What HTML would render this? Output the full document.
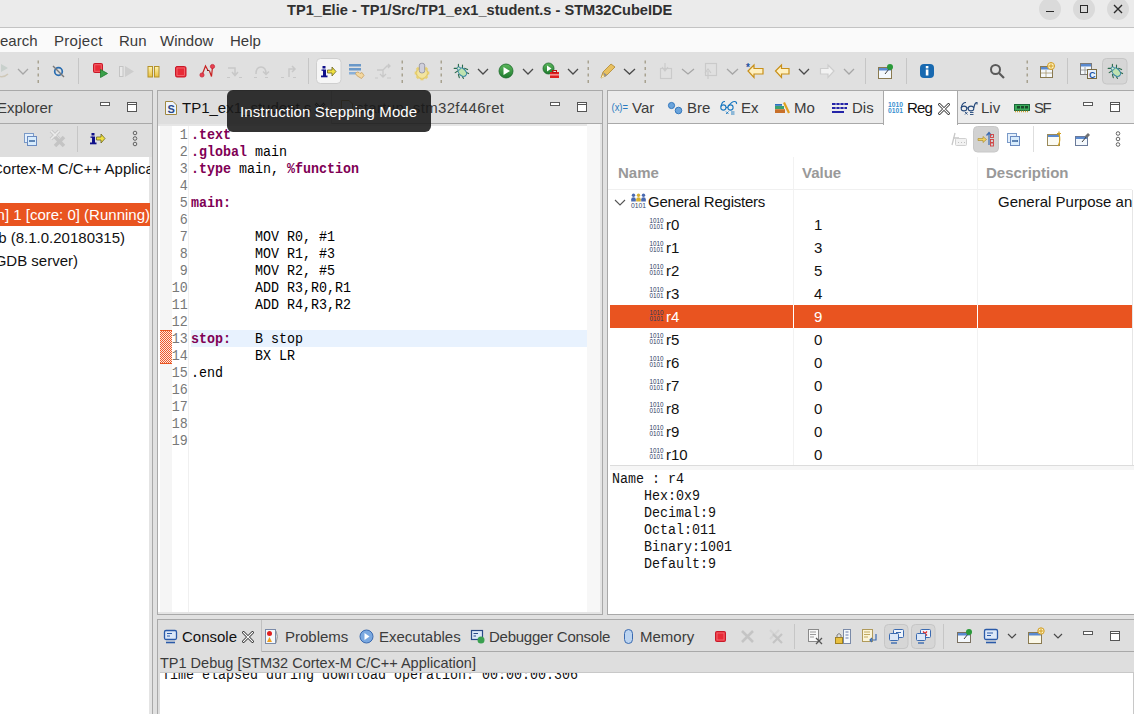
<!DOCTYPE html>
<html><head><meta charset="utf-8">
<style>
*{box-sizing:border-box;margin:0;padding:0}
html,body{width:1134px;height:714px;overflow:hidden;background:#e1e1e1;font-family:"Liberation Sans",sans-serif;font-size:15px;color:#1e1e1e}
.a{position:absolute}
.t{position:absolute;white-space:nowrap;line-height:17px;font-size:15px}
.m{position:absolute;white-space:nowrap;font-family:"Liberation Mono",monospace;font-size:14.5px;line-height:17px;transform:scaleX(0.9195);transform-origin:0 0}
svg{position:absolute;overflow:visible}
.sep{position:absolute;width:1px;background:#c4c4c4}
.dsep{position:absolute;width:2px;background:repeating-linear-gradient(#a09a88 0 3px,transparent 3px 6px)}
.chev{position:absolute;width:11px;height:6px}
</style></head><body>
<!-- TITLE BAR -->
<div class="a" style="left:0;top:0;width:1134px;height:27px;background:#ebebeb"></div>
<div class="a" style="left:0;top:27px;width:1134px;height:1px;background:#c3c3c3"></div>
<div class="t" style="left:287px;top:2px;font-weight:bold;font-size:14.6px;color:#303030">TP1_Elie - TP1/Src/TP1_ex1_student.s - STM32CubeIDE</div>
<div class="a" style="left:1039px;top:-2px;width:22px;height:22px;border-radius:50%;background:#dadada"></div>
<div class="a" style="left:1073px;top:-2px;width:22px;height:22px;border-radius:50%;background:#dadada"></div>
<div class="a" style="left:1107px;top:-2px;width:22px;height:22px;border-radius:50%;background:#dadada"></div>
<div class="a" style="left:1046px;top:10.5px;width:8px;height:1.5px;background:#2b2b2b"></div>
<div class="a" style="left:1080px;top:5px;width:8px;height:8px;border:1.5px solid #2b2b2b"></div>
<svg style="left:1114px;top:5px" width="8" height="8"><path d="M0 0L8 8M8 0L0 8" stroke="#2b2b2b" stroke-width="1.4"/></svg>

<!-- MENU -->
<div class="a" style="left:0;top:28px;width:1134px;height:24px;background:#fafafa"></div>
<div class="t" style="left:-10px;top:32px;color:#3a3a3a">Search</div>
<div class="t" style="left:54px;top:32px;color:#3a3a3a;letter-spacing:0.3px">Project</div>
<div class="t" style="left:119px;top:32px;color:#3a3a3a">Run</div>
<div class="t" style="left:160px;top:32px;color:#3a3a3a">Window</div>
<div class="t" style="left:230px;top:32px;color:#3a3a3a">Help</div>

<!-- TOOLBAR -->
<div class="a" style="left:0;top:52px;width:1134px;height:38px;background:#e0e0e0"></div>
<!--TOOLBAR_ICONS-->
<svg style="left:0;top:0" width="1134" height="714" viewBox="0 0 1134 714">
<defs>
<linearGradient id="yel" x1="0" y1="0" x2="0" y2="1"><stop offset="0" stop-color="#fff3b0"/><stop offset="1" stop-color="#e8c040"/></linearGradient>
<linearGradient id="grn" x1="0" y1="0" x2="0" y2="1"><stop offset="0" stop-color="#5cb85c"/><stop offset="1" stop-color="#1e7a2e"/></linearGradient>
<linearGradient id="red" x1="0" y1="0" x2="0" y2="1"><stop offset="0" stop-color="#f05050"/><stop offset="1" stop-color="#c81818"/></linearGradient>
</defs>
<!-- separators -->
<g fill="#a8a290">
<rect x="37.5" y="60.5" width="1.5" height="3"/><rect x="37.5" y="67" width="1.5" height="3"/><rect x="37.5" y="73.5" width="1.5" height="3"/><rect x="37.5" y="80" width="1.5" height="3"/>
<rect x="401.5" y="60.5" width="1.5" height="3"/><rect x="401.5" y="67" width="1.5" height="3"/><rect x="401.5" y="73.5" width="1.5" height="3"/><rect x="401.5" y="80" width="1.5" height="3"/>
<rect x="440.5" y="60.5" width="1.5" height="3"/><rect x="440.5" y="67" width="1.5" height="3"/><rect x="440.5" y="73.5" width="1.5" height="3"/><rect x="440.5" y="80" width="1.5" height="3"/>
<rect x="587.5" y="60.5" width="1.5" height="3"/><rect x="587.5" y="67" width="1.5" height="3"/><rect x="587.5" y="73.5" width="1.5" height="3"/><rect x="587.5" y="80" width="1.5" height="3"/>
<rect x="644.5" y="60.5" width="1.5" height="3"/><rect x="644.5" y="67" width="1.5" height="3"/><rect x="644.5" y="73.5" width="1.5" height="3"/><rect x="644.5" y="80" width="1.5" height="3"/>
<rect x="1026.5" y="60.5" width="1.5" height="3"/><rect x="1026.5" y="67" width="1.5" height="3"/><rect x="1026.5" y="73.5" width="1.5" height="3"/><rect x="1026.5" y="80" width="1.5" height="3"/>
</g>
<g fill="#c6c6c6">
<rect x="78" y="58" width="1" height="26"/><rect x="308" y="58" width="1" height="26"/><rect x="865" y="58" width="1" height="26"/><rect x="906" y="58" width="1" height="26"/><rect x="1067" y="58" width="1" height="26"/>
</g>
<!-- chevrons -->
<g fill="none" stroke-width="1.3">
<path d="M18 69L23 74L28 69" stroke="#a6a6a6"/>
<path d="M478 69L483 74L488 69" stroke="#4a4a4a"/>
<path d="M523 69L528 74L533 69" stroke="#4a4a4a"/>
<path d="M568 69L573 74L578 69" stroke="#4a4a4a"/>
<path d="M624 69L629.5 74L635 69" stroke="#4a4a4a"/>
<path d="M682 69L688 74L694 69" stroke="#a6a6a6"/>
<path d="M727 69L732.5 74L738 69" stroke="#a6a6a6"/>
<path d="M799 69L804 74L809 69" stroke="#4a4a4a"/>
<path d="M844 69L849 74L854 69" stroke="#a6a6a6"/>
</g>
<!-- 1 grayed partial -->
<path d="M1 64L8 68L1 72Z" fill="#c8d0cc"/><path d="M-2 76Q4 78 8 74" fill="none" stroke="#cfc8b8" stroke-width="1.5"/>
<!-- skip breakpoints -->
<circle cx="58.5" cy="71.5" r="3.8" fill="none" stroke="#2a6db0" stroke-width="1.7"/>
<path d="M53 66L64 77" stroke="#7a7a7a" stroke-width="1.4"/>
<!-- terminate relaunch -->
<rect x="93.5" y="63.5" width="9" height="9" rx="1" fill="#e82a36" stroke="#c81828" stroke-width="1"/>
<rect x="94.8" y="64.8" width="6.4" height="6.4" fill="none" stroke="#f47a80" stroke-width="0.7"/>
<path d="M100.5 69.5L107.5 73.5L100.5 77.5Z" fill="#3aa04a" stroke="#1a7a2a" stroke-width="0.8"/>
<!-- resume grayed -->
<rect x="119.5" y="66.5" width="3.5" height="10" fill="#e8e8e8" stroke="#c4c4c4"/>
<path d="M125 66L134 71.5L125 77Z" fill="#cdcdcd"/>
<!-- suspend -->
<rect x="148" y="66.5" width="4.5" height="10.5" fill="url(#yel)" stroke="#b4922a" stroke-width="1"/>
<rect x="154.5" y="66.5" width="4.5" height="10.5" fill="url(#yel)" stroke="#b4922a" stroke-width="1"/>
<!-- terminate -->
<rect x="175.5" y="66.5" width="10.5" height="10.5" rx="1.5" fill="#e82a36" stroke="#c81828" stroke-width="1"/>
<rect x="177" y="68" width="7.5" height="7.5" fill="none" stroke="#f47a80" stroke-width="0.7"/>
<!-- disconnect -->
<path d="M202 75L205.5 66L208 70.5M209.5 71L211.5 76.5L212.5 67" fill="none" stroke="#c82020" stroke-width="1.2"/>
<path d="M207 70.5H209.5" stroke="#7a2020" stroke-width="1"/>
<circle cx="202" cy="75" r="2.1" fill="#e84050" stroke="#c02030" stroke-width="0.7"/><circle cx="212.5" cy="66.5" r="2.1" fill="#e84050" stroke="#c02030" stroke-width="0.7"/>
<!-- step into/over/return grayed -->
<g fill="none" stroke="#c8c8c8" stroke-width="1.5">
<path d="M228 68H235V75M232 72L235 75.5L238 72"/><path d="M227 77.5H230M239 77.5H242" stroke-width="1.2"/>
<path d="M256 74Q256 67 261 67Q266 67 266 74M263 71.5L266 74.5L269 71.5"/><path d="M254 77.5H257M265 77.5H268" stroke-width="1.2"/>
<path d="M289 77V69H295M292 66L295 69L292 72"/><path d="M281 77.5H284M293 77.5H296" stroke-width="1.2"/>
</g>
<!-- selected instruction stepping button -->
<rect x="316.5" y="58.5" width="24.5" height="25" rx="4" fill="#f6f6f6" stroke="#cfcfcf"/>
<g transform="translate(231 -67)"><rect x="91.5" y="133" width="3" height="2.5" fill="#10108a"/><rect x="92" y="136.5" width="3" height="7" fill="#10108a"/><rect x="90" y="142.5" width="6.5" height="1.8" fill="#10108a"/><rect x="90.5" y="136.5" width="2" height="1.3" fill="#10108a"/>
<path d="M96.5 137H101V134L105 138.5L101 143V140H96.5Z" fill="#f0e040" stroke="#6a6420" stroke-width="0.8"/></g>
<!-- use step filters -->
<rect x="349" y="64" width="12" height="2.5" fill="#6a98c8"/><rect x="349" y="68" width="12" height="2.5" fill="#6a98c8"/><rect x="349" y="72" width="7" height="2.5" fill="#8ab0d8"/>
<path d="M355.5 73.5Q357 71 359 72.5L360 73.5L362 72.5L364 75.5L361.5 78.5L359 77Q357 76.5 355.5 73.5Z" fill="#f4d8a0" stroke="#c8a060" stroke-width="0.8"/>
<!-- grayed -->
<path d="M377 70H383V77M380 74L383 77L386 74M383 70L387 66H390M388 64L390 66L388 68" fill="none" stroke="#c8c8c8" stroke-width="1.3"/>
<path d="M375 78H378M387 78H391" stroke="#c8c8c8" stroke-width="1.2"/>
<!-- yellow gear -->
<g transform="translate(422 73)"><circle r="5.6" fill="#f2e4a0" stroke="#d4b850" stroke-width="1"/>
<g fill="#e8d070"><rect x="-1.5" y="-7.3" width="3" height="2.5"/><rect x="-1.5" y="4.8" width="3" height="2.5"/><rect x="-7.3" y="-1.5" width="2.5" height="3"/><rect x="4.8" y="-1.5" width="2.5" height="3"/>
<rect x="-1.5" y="-7.3" width="3" height="2.5" transform="rotate(45)"/><rect x="-1.5" y="4.8" width="3" height="2.5" transform="rotate(45)"/><rect x="-7.3" y="-1.5" width="2.5" height="3" transform="rotate(45)"/><rect x="4.8" y="-1.5" width="2.5" height="3" transform="rotate(45)"/></g></g>
<rect x="419.3" y="63.3" width="5.4" height="9.6" rx="2.2" fill="#d0d0dc" stroke="#8a8a98" stroke-width="0.8"/>
<!-- bug -->
<g id="bugT"><g stroke="#2a6a4a" stroke-width="1.1" fill="none" stroke-linecap="round">
<path d="M458.4 64.3V67M462.5 65V67.5M454.2 68.4H457M455.2 72.6L457.8 71M458.4 74.5L459.3 77.6M464.6 68.2L467.6 69.6M466 72.3L468.6 73.6M462.4 76.8L463.5 78.4"/>
</g>
<ellipse cx="462.3" cy="72.2" rx="3.4" ry="4.8" fill="#bfe3b0" stroke="#2a80a0" stroke-width="1" transform="rotate(-45 462.3 72.2)"/>
<circle cx="458.7" cy="68.5" r="1.6" fill="#d8f0d0" stroke="#2a80a0" stroke-width="0.9"/></g>
<!-- green play -->
<circle cx="506" cy="71" r="7" fill="url(#grn)" stroke="#1a6a2a" stroke-width="0.8"/>
<path d="M503.5 67L510 71L503.5 75Z" fill="#fff"/>
<!-- ext tools -->
<circle cx="548.5" cy="68.5" r="5.5" fill="url(#grn)" stroke="#1a6a2a" stroke-width="0.8"/>
<path d="M547 65.5L551.5 68.5L547 71.5Z" fill="#fff"/>
<rect x="550" y="72" width="9" height="6" fill="#e02020"/><rect x="552.5" y="70.5" width="4" height="2" fill="none" stroke="#c01010"/><rect x="550" y="74.5" width="9" height="0.8" fill="#fff"/>
<!-- pen -->
<path d="M601 78L603 72L611 64L615 67L607 75Z" fill="#e8c060" stroke="#b08830" stroke-width="0.8"/>
<path d="M603 72L607 75L605 77Z" fill="#909090"/><path d="M601 78L603 75L604 77Z" fill="#fff8d0"/>
<!-- grayed import/export -->
<g fill="none" stroke="#cacaca" stroke-width="1.2">
<rect x="660.5" y="68.5" width="11" height="10"/><path d="M665 63V70M662 67L665 71L668 67"/>
<rect x="705.5" y="63.5" width="11" height="12"/><path d="M708 79V71M705 73L708 69L711 73"/>
</g>
<!-- last edit -->
<path d="M747 71L753 65V68.5H762V74H753V77.5Z" fill="#fff0c0" stroke="#c8901a" stroke-width="1.2" transform="translate(1 0)"/>
<text x="746" y="71" font-size="10" fill="#2050a0" font-family="Liberation Sans" font-weight="bold">*</text>
<!-- back -->
<path d="M775.5 71L781.5 65V68.5H789V74H781.5V77.5Z" fill="#fff0c0" stroke="#c8901a" stroke-width="1.2"/>
<!-- forward grayed -->
<path d="M834 71L828 65V68.5H820.5V74H828V77.5Z" fill="#f2f2f2" stroke="#cdcdcd" stroke-width="1.2"/>
<!-- pin editor -->
<rect x="878.5" y="67.5" width="13" height="11" fill="#f4f8fc" stroke="#8a7a50"/><rect x="879" y="68" width="12" height="2.5" fill="#5a8ad0"/>
<path d="M885 74L889 69" stroke="#404040" stroke-width="1"/><circle cx="890" cy="67" r="3" fill="#2a9a3a"/>
<!-- info -->
<rect x="920" y="64" width="14" height="14" rx="4" fill="#1869b0"/>
<rect x="925.8" y="69.5" width="2.6" height="6" fill="#fff"/><rect x="925.8" y="66" width="2.6" height="2.4" fill="#fff"/>
<!-- search -->
<circle cx="995.5" cy="69.5" r="4.5" fill="none" stroke="#5a5a5a" stroke-width="2"/>
<path d="M999 73L1004 78" stroke="#5a5a5a" stroke-width="2.2"/>
<!-- open perspective -->
<rect x="1040.5" y="66.5" width="12" height="11" fill="#f4f8fc" stroke="#8a7a50"/><rect x="1041" y="67" width="11" height="2.5" fill="#5a8ad0"/>
<path d="M1046 70V77M1041 73H1052" stroke="#a89870" stroke-width="0.8"/>
<circle cx="1051" cy="66" r="3.5" fill="#fff4c0" stroke="#d09a20"/><path d="M1051 63.5V68.5M1048.5 66H1053.5" stroke="#d09a20" stroke-width="1"/>
<!-- C/C++ perspective -->
<rect x="1080.5" y="63.5" width="11" height="11" fill="#f4f8fc" stroke="#7a7a7a"/><rect x="1081" y="64" width="10" height="2.5" fill="#5a8ad0"/>
<path d="M1085 67V74M1081 70H1091" stroke="#909090" stroke-width="0.8"/>
<rect x="1087.5" y="69.5" width="9" height="9" fill="#e8f0fa" stroke="#7a6a40"/>
<text x="1089" y="77.5" font-size="9" font-weight="bold" fill="#1a50a0" font-family="Liberation Sans">C</text>
<!-- debug perspective selected -->
<rect x="1102.5" y="58.5" width="24.5" height="25.5" rx="4" fill="#d6d6d6" stroke="#c6c6c6"/>
<g transform="translate(654 0)"><g stroke="#2a6a4a" stroke-width="1.1" fill="none" stroke-linecap="round">
<path d="M458.4 64.3V67M462.5 65V67.5M454.2 68.4H457M455.2 72.6L457.8 71M458.4 74.5L459.3 77.6M464.6 68.2L467.6 69.6M466 72.3L468.6 73.6M462.4 76.8L463.5 78.4"/>
</g>
<ellipse cx="462.3" cy="72.2" rx="3.4" ry="4.8" fill="#bfe3b0" stroke="#2a80a0" stroke-width="1" transform="rotate(-45 462.3 72.2)"/>
<circle cx="458.7" cy="68.5" r="1.6" fill="#d8f0d0" stroke="#2a80a0" stroke-width="0.9"/></g>
</svg>

<!--/TOOLBAR_ICONS-->

<!--PANELS-->
<!-- ========== LEFT PANEL (Debug) ========== -->
<div class="a" style="left:-1px;top:90px;width:154px;height:640px;border:1px solid #a9a9a9;background:#e4e4e4"></div>
<div class="a" style="left:0;top:91px;width:152px;height:32px;background:#dedede"></div>
<div class="a" style="left:0;top:123px;width:152px;height:1px;background:#a9a9a9"></div>
<div class="a" style="left:0;top:124px;width:152px;height:33px;background:#dedede"></div>
<div class="a" style="left:0;top:157px;width:149px;height:560px;background:#fff"></div>
<div class="t" style="left:-3px;top:99px;color:#3c3c3c">Explorer</div>
<div class="a" style="left:100px;top:102px;width:10px;height:4px;border:1px solid #5a5a5a;background:#fff"></div>
<div class="a" style="left:127px;top:102px;width:10px;height:10px;border:1px solid #555;background:linear-gradient(#fff 0 1px,#555 1px 2px,#fff 2px)"></div>
<svg style="left:0;top:0" width="160" height="160" viewBox="0 0 160 160">
<rect x="24.5" y="133.5" width="9" height="9" fill="#e4f0fc" stroke="#7a9ac8"/>
<rect x="27.5" y="136.5" width="9" height="9" fill="#d8ecfc" stroke="#6a8ac0"/>
<path d="M29 141H35" stroke="#1f4f8f" stroke-width="1.3"/>
<path d="M51 131L59 139M59 131L51 139" stroke="#c8c8c8" stroke-width="3.6"/><path d="M51 131L59 139M59 131L51 139" stroke="#ececec" stroke-width="1.6"/>
<path d="M55 137L64 146M64 137L55 146" stroke="#c4c4c4" stroke-width="3.6"/>
<rect x="77" y="126" width="1" height="26" fill="#c6c6c6"/>
<g id="istep"><rect x="91.5" y="133" width="3" height="2.5" fill="#10108a"/><rect x="92" y="136.5" width="3" height="7" fill="#10108a"/><rect x="90" y="142.5" width="6.5" height="1.8" fill="#10108a"/><rect x="90.5" y="136.5" width="2" height="1.3" fill="#10108a"/>
<path d="M96.5 137H101V134L105 138.5L101 143V140H96.5Z" fill="#f0e040" stroke="#6a6420" stroke-width="0.8"/></g>
<circle cx="135" cy="133" r="1.8" fill="none" stroke="#555" stroke-width="0.9"/><circle cx="135" cy="138.5" r="1.8" fill="none" stroke="#555" stroke-width="0.9"/><circle cx="135" cy="144" r="1.8" fill="none" stroke="#555" stroke-width="0.9"/>
</svg>
<div class="a" style="left:0;top:157px;width:150px;height:560px;overflow:hidden">
<div class="t" style="left:-8px;top:3px;color:#111">Cortex-M C/C++ Application</div>
<div class="a" style="left:0;top:46px;width:150px;height:23px;background:#e95420"></div>
<div class="t" style="right:0;top:49px;color:#fff">[main] 1 [core: 0] (Running)</div>
<div class="t" style="right:25px;top:72px;color:#111">gdb (8.1.0.20180315)</div>
<div class="t" style="right:72px;top:95px;color:#111">(GDB server)</div>
</div>
<!-- ========== EDITOR ========== -->
<div class="a" style="left:157px;top:90px;width:446px;height:525px;border:1px solid #a9a9a9;background:#e4e4e4"></div>
<div class="a" style="left:158px;top:91px;width:444px;height:32px;background:#dedede"></div>
<div class="a" style="left:158px;top:123px;width:444px;height:1px;background:#a9a9a9"></div>
<svg style="left:0;top:0" width="360" height="130" viewBox="0 0 360 130">
<path d="M341.5 100.5H349L352.5 104V116.5H341.5Z" fill="#eef4fc" stroke="#a08840"/>
</svg>
<div class="t" style="left:356px;top:99px;color:#3c3c3c;letter-spacing:0.33px">startup_stm32f446ret</div>
<div class="a" style="left:550px;top:102px;width:10px;height:4px;border:1px solid #5a5a5a;background:#fff"></div>
<div class="a" style="left:577px;top:102px;width:10px;height:10px;border:1px solid #555;background:linear-gradient(#fff 0 1px,#555 1px 2px,#fff 2px)"></div>
<!-- editor content -->
<div class="a" style="left:158px;top:124px;width:444px;height:2px;background:#e6e6e6"></div>
<div class="a" style="left:158px;top:126px;width:444px;height:486px;background:#fff"></div>
<div class="a" style="left:160px;top:126px;width:12px;height:486px;background:#f5f5f5"></div>
<div class="a" style="left:188px;top:126px;width:1px;height:486px;background:#f0f0f0"></div>
<div class="a" style="left:587px;top:124px;width:13px;height:488px;background:#f7f7f7"></div>
<div class="a" style="left:600px;top:124px;width:2px;height:490px;background:#e4e4e4"></div>
<div class="a" style="left:158px;top:612px;width:444px;height:2px;background:#e4e4e4"></div>
<!-- current line highlight -->
<div class="a" style="left:191px;top:330px;width:396px;height:17px;background:#e8f2fe"></div>
<!-- breakpoint markers -->
<div class="a" style="left:160px;top:330px;width:12px;height:34px;border-top:1px solid #e95420;border-bottom:1px solid #e95420;background:repeating-conic-gradient(#ee5a2a 0 25%,#fde8e0 0 50%) 0 0/2px 2px"></div>
<!--EDITOR_TEXT-->
<div class="a" style="left:158px;top:91px;width:174px;height:35px;background:#dedede;border-right:1px solid #c0c0c0"></div>
<div class="a" style="left:158px;top:124px;width:174px;height:2px;background:#e6e6e6"></div>
<svg style="left:0;top:0" width="200" height="130" viewBox="0 0 200 130">
<path d="M165.5 101.5H173L176.5 105V114.5H165.5Z" fill="#eef4fc" stroke="#a08840"/>
<text x="167.5" y="113" font-family="Liberation Sans" font-size="11" font-weight="bold" fill="#2a4a8a">S</text>
</svg>
<div class="t" style="left:182px;top:99px;color:#111">TP1_ex1_student.s</div>
<svg style="left:0;top:0" width="340" height="130" viewBox="0 0 340 130">
<path d="M315.5 103.5L324.5 112.5M324.5 103.5L315.5 112.5" stroke="#222" stroke-width="2.6"/>
<path d="M315.5 103.5L324.5 112.5M324.5 103.5L315.5 112.5" stroke="#dedede" stroke-width="1"/>
</svg>
<div class="m" style="left:163px;top:127px;width:27px;text-align:right;color:#787878;line-height:17px">1<br>2<br>3<br>4<br>5<br>6<br>7<br>8<br>9<br>10<br>11<br>12<br>13<br>14<br>15<br>16<br>17<br>18<br>19</div>
<div class="m" style="left:191px;top:127px;color:#000;line-height:17px;white-space:pre"><b style="color:#7f0055">.text</b><br><b style="color:#7f0055">.global</b> main<br><b style="color:#7f0055">.type</b> main, <b style="color:#7f0055">%function</b><br><br><b style="color:#7f0055">main:</b><br><br>        MOV R0, #1<br>        MOV R1, #3<br>        MOV R2, #5<br>        ADD R3,R0,R1<br>        ADD R4,R3,R2<br><br><b style="color:#7f0055">stop:</b>   B stop<br>        BX LR<br>.end</div>

<!--/EDITOR_TEXT-->

<!-- ========== REGISTERS ========== -->
<div class="a" style="left:607px;top:90px;width:530px;height:525px;border:1px solid #a9a9a9;background:#fff"></div>
<div class="a" style="left:608px;top:91px;width:528px;height:32px;background:#ececec"></div>
<div class="a" style="left:608px;top:123px;width:528px;height:1px;background:#a9a9a9"></div>
<!--REG_CONTENT-->
<!-- tabs -->
<div class="a" style="left:883px;top:91px;width:75px;height:34px;background:#fff;border-left:1px solid #a9a9a9;border-right:1px solid #a9a9a9"></div>
<svg style="left:0;top:0" width="1134" height="714" viewBox="0 0 1134 714">
<!-- (x)= -->
<text x="611.5" y="111" font-family="Liberation Sans" font-size="10.5" fill="#2a7ac0" textLength="16.5" lengthAdjust="spacingAndGlyphs">(x)=</text>
<!-- breakpoints -->
<circle cx="671.5" cy="105.5" r="3.1" fill="#6aa4dc" stroke="#2a70b8" stroke-width="0.9"/>
<circle cx="678.5" cy="110.5" r="3.3" fill="#6aa4dc" stroke="#2a70b8" stroke-width="0.9"/>
<!-- expressions glasses -->
<g fill="none" stroke="#1a78c0" stroke-width="1.1">
<circle cx="723.4" cy="107.5" r="2.6"/><circle cx="730.5" cy="107.5" r="2.6"/><path d="M726 107.5H728M721 106.5Q722 101 725 101.5M728 106.5Q732 101 735 101.5Q737 102 736.5 104"/>
<path d="M726 111.5L728.5 114M728.5 111.5L726 114M731 112H734.5M731 114H734.5" stroke-width="0.9"/>
</g>
<!-- modules books -->
<rect x="775" y="104" width="7" height="1.8" fill="#2a70c0"/><rect x="775" y="106" width="9" height="3" fill="#3aa070"/><rect x="775" y="109.2" width="10" height="3.8" fill="#c8702a"/>
<path d="M784 102.5L789 113" stroke="#e0a020" stroke-width="2.2"/>
<!-- disassembly -->
<g fill="#2424a8"><rect x="832" y="103" width="16" height="2"/><rect x="832" y="107" width="15" height="2"/><rect x="832" y="111" width="12" height="2"/></g>
<path d="M836 102.5V109.5M840 102.5V109.5M844 102.5V109.5" stroke="#ececec" stroke-width="0.8"/>
<!-- registers icon -->
<text x="888" y="107.3" font-family="Liberation Sans" font-size="7" font-weight="bold" fill="#3a90d0" textLength="15" lengthAdjust="spacingAndGlyphs">1010</text>
<text x="888" y="113.3" font-family="Liberation Sans" font-size="7" font-weight="bold" fill="#3a90d0" textLength="15" lengthAdjust="spacingAndGlyphs">0101</text>
<path d="M939.5 104.5L948.5 113.5M948.5 104.5L939.5 113.5" stroke="#2a2a2a" stroke-width="2.8" stroke-linecap="round"/>
<path d="M939.5 104.5L948.5 113.5M948.5 104.5L939.5 113.5" stroke="#fff" stroke-width="1.1" stroke-linecap="round"/>
<!-- live expressions -->
<g fill="none" stroke="#24487a" stroke-width="1.1">
<ellipse cx="964" cy="108.5" rx="2.8" ry="2.4"/><ellipse cx="971" cy="108.5" rx="2.8" ry="2.4"/><path d="M966.8 108H968.2M961.2 108Q962 102.5 966 102.5M973.8 108Q975 102 977 102.5V104.5"/>
<path d="M965 112L967.5 114.5M967.5 112L965 114.5M970 112.5H973.5M970 114.5H973.5" stroke-width="0.9"/>
</g>
<!-- SFR memory -->
<rect x="1014.5" y="104.5" width="15" height="6" fill="#3aaa5a" stroke="#1a6a3a"/>
<rect x="1017" y="106" width="3" height="2.5" fill="#1a4a2a"/><rect x="1021" y="106" width="3" height="2.5" fill="#1a4a2a"/><rect x="1025" y="106" width="3" height="2.5" fill="#1a4a2a"/>
<path d="M1015 111.5H1029" stroke="#c8a030" stroke-width="1.6" stroke-dasharray="1 1"/>
</svg>
<div class="t" style="left:632px;top:99px;color:#3c3c3c">Var</div>
<div class="t" style="left:687px;top:99px;color:#3c3c3c">Bre</div>
<div class="t" style="left:741px;top:99px;color:#3c3c3c">Ex</div>
<div class="t" style="left:794px;top:99px;color:#3c3c3c">Mo</div>
<div class="t" style="left:852px;top:99px;color:#3c3c3c">Dis</div>
<div class="t" style="left:907px;top:99px;color:#111;letter-spacing:-0.8px">Reg</div>
<div class="t" style="left:981px;top:99px;color:#3c3c3c">Liv</div>
<div class="t" style="left:1034px;top:99px;color:#3c3c3c;letter-spacing:-1.5px">SF</div>
<div class="a" style="left:1083px;top:102px;width:10px;height:4px;border:1px solid #5a5a5a;background:#fff"></div>
<div class="a" style="left:1110px;top:102px;width:10px;height:10px;border:1px solid #555;background:linear-gradient(#fff 0 1px,#555 1px 2px,#fff 2px)"></div>

<!-- registers toolbar -->
<svg style="left:0;top:0" width="1134" height="714" viewBox="0 0 1134 714">
<path d="M955 133L952 145M953 138H959" stroke="#c8c8c8" stroke-width="1.3" fill="none"/>
<rect x="955.5" y="138.5" width="11" height="7" rx="1" fill="#f2f2f2" stroke="#d0d0d0"/>
<path d="M958 142.5H959M961 142.5H962M964 142.5H965" stroke="#c0c0c0"/>
<rect x="973.5" y="126.5" width="25" height="25.5" rx="4" fill="#d2d2d2" stroke="#c8c8c8"/>
<path d="M978 138.5H983V136.5L986.5 139.5L983 142.5V140.5H978Z" fill="#f0d060" stroke="#b09030" stroke-width="0.7"/>
<path d="M989 133V145M986.5 135.5L989 132.5L991.5 135.5" stroke="#3a6ab0" stroke-width="1.2" fill="none"/>
<rect x="990.5" y="134.5" width="3" height="3" fill="none" stroke="#d04040" stroke-width="0.9"/><rect x="990.5" y="139.5" width="3" height="3" fill="none" stroke="#d04040" stroke-width="0.9"/><rect x="990.5" y="143" width="3" height="3" fill="none" stroke="#d04040" stroke-width="0.9"/>
<rect x="1007.5" y="133.5" width="9" height="9" fill="#e4f0fc" stroke="#7a9ac8"/>
<rect x="1010.5" y="136.5" width="9" height="9" fill="#d8ecfc" stroke="#6a8ac0"/>
<path d="M1012 141H1018" stroke="#1f4f8f" stroke-width="1.3"/>
<rect x="1033" y="126" width="1" height="26" fill="#dedede"/>
<rect x="1047.5" y="134.5" width="12" height="11" fill="#fbfbf4" stroke="#9a8a5a"/><rect x="1048" y="135" width="11" height="2" fill="#5a8ad0"/>
<path d="M1058 146Q1061 141 1059 134M1057 133.5H1061M1059 131.5V135.5" fill="none" stroke="#d0a020" stroke-width="1.2"/>
<rect x="1075.5" y="136.5" width="12" height="9" fill="#f4f8fc" stroke="#6a7a9a"/><rect x="1076" y="137" width="11" height="2" fill="#5a8ad0"/>
<path d="M1082 142L1087 136" stroke="#404040" stroke-width="1"/><path d="M1085 136L1088 133L1090 135L1087 138Z" fill="#707070"/>
<circle cx="1118" cy="133.5" r="1.8" fill="none" stroke="#555" stroke-width="0.9"/><circle cx="1118" cy="139" r="1.8" fill="none" stroke="#555" stroke-width="0.9"/><circle cx="1118" cy="144.5" r="1.8" fill="none" stroke="#555" stroke-width="0.9"/>
</svg>

<!-- table -->
<div class="a" style="left:793px;top:157px;width:1px;height:308px;background:#f2f2f2"></div>
<div class="a" style="left:977px;top:157px;width:1px;height:308px;background:#f2f2f2"></div>
<div class="a" style="left:608px;top:189px;width:524px;height:1px;background:#f0f0f0"></div>
<div class="a" style="left:1132px;top:190px;width:1px;height:275px;background:#e6e6e6"></div>
<div class="t" style="left:618px;top:164px;font-weight:bold;color:#999">Name</div>
<div class="t" style="left:802px;top:164px;font-weight:bold;color:#999">Value</div>
<div class="t" style="left:986px;top:164px;font-weight:bold;color:#999">Description</div>
<!-- orange row -->
<div class="a" style="left:610px;top:305px;width:522px;height:23px;background:#e95420"></div>
<div class="a" style="left:793px;top:305px;width:1px;height:23px;background:#fff"></div>
<div class="a" style="left:977px;top:305px;width:1px;height:23px;background:#fff"></div>
<svg style="left:0;top:0" width="1134" height="714" viewBox="0 0 1134 714">
<path d="M615 200L620 205L625 200" fill="none" stroke="#555" stroke-width="1.1"/>
<g fill="#4a6ab0"><circle cx="633.5" cy="195.3" r="1.7"/><circle cx="643.5" cy="195.3" r="1.7"/><path d="M631.2 201.5V199.3Q631.2 197.2 633.5 197.2Q635.8 197.2 635.8 199.3V201.5Z"/><path d="M641.2 201.5V199.3Q641.2 197.2 643.5 197.2Q645.8 197.2 645.8 199.3V201.5Z"/></g>
<g fill="#d8b030"><circle cx="638.5" cy="195.3" r="1.7"/><path d="M636.2 201.5V199.3Q636.2 197.2 638.5 197.2Q640.8 197.2 640.8 199.3V201.5Z"/></g>
<text x="631" y="207.5" font-family="Liberation Sans" font-size="7.2" fill="#34466e" textLength="15" lengthAdjust="spacingAndGlyphs">0101</text>
<g font-family="Liberation Sans" font-size="7.4" fill="#2a3a60">
<text x="649.5" y="222.7" textLength="14" lengthAdjust="spacingAndGlyphs">1010</text><text x="649.5" y="229.2" textLength="14" lengthAdjust="spacingAndGlyphs">0101</text>
<text x="649.5" y="245.7" textLength="14" lengthAdjust="spacingAndGlyphs">1010</text><text x="649.5" y="252.2" textLength="14" lengthAdjust="spacingAndGlyphs">0101</text>
<text x="649.5" y="268.7" textLength="14" lengthAdjust="spacingAndGlyphs">1010</text><text x="649.5" y="275.2" textLength="14" lengthAdjust="spacingAndGlyphs">0101</text>
<text x="649.5" y="291.7" textLength="14" lengthAdjust="spacingAndGlyphs">1010</text><text x="649.5" y="298.2" textLength="14" lengthAdjust="spacingAndGlyphs">0101</text>
<text x="649.5" y="314.7" textLength="14" lengthAdjust="spacingAndGlyphs">1010</text><text x="649.5" y="321.2" textLength="14" lengthAdjust="spacingAndGlyphs">0101</text>
<text x="649.5" y="337.7" textLength="14" lengthAdjust="spacingAndGlyphs">1010</text><text x="649.5" y="344.2" textLength="14" lengthAdjust="spacingAndGlyphs">0101</text>
<text x="649.5" y="360.7" textLength="14" lengthAdjust="spacingAndGlyphs">1010</text><text x="649.5" y="367.2" textLength="14" lengthAdjust="spacingAndGlyphs">0101</text>
<text x="649.5" y="383.7" textLength="14" lengthAdjust="spacingAndGlyphs">1010</text><text x="649.5" y="390.2" textLength="14" lengthAdjust="spacingAndGlyphs">0101</text>
<text x="649.5" y="406.7" textLength="14" lengthAdjust="spacingAndGlyphs">1010</text><text x="649.5" y="413.2" textLength="14" lengthAdjust="spacingAndGlyphs">0101</text>
<text x="649.5" y="429.7" textLength="14" lengthAdjust="spacingAndGlyphs">1010</text><text x="649.5" y="436.2" textLength="14" lengthAdjust="spacingAndGlyphs">0101</text>
<text x="649.5" y="452.7" textLength="14" lengthAdjust="spacingAndGlyphs">1010</text><text x="649.5" y="459.2" textLength="14" lengthAdjust="spacingAndGlyphs">0101</text>
</g>
</svg>
<div class="t" style="left:648px;top:193px;color:#111;letter-spacing:-0.22px">General Registers</div>
<div class="t" style="left:998px;top:193px;color:#111;width:134px;overflow:hidden">General Purpose and</div>
<div class="t" style="left:666px;top:213px;color:#111;line-height:23px">r0<br>r1<br>r2<br>r3<br><span style="color:#fff">r4</span><br>r5<br>r6<br>r7<br>r8<br>r9<br>r10</div>
<div class="t" style="left:814px;top:213px;color:#111;line-height:23px">1<br>3<br>5<br>4<br><span style="color:#fff">9</span><br>0<br>0<br>0<br>0<br>0<br>0</div>
<!-- details pane -->
<div class="a" style="left:608px;top:465px;width:528px;height:147px;background:#fff"></div>
<div class="a" style="left:610px;top:465px;width:526px;height:1px;background:#dcdcdc"></div>
<div class="a" style="left:610px;top:466px;width:526px;height:4px;background:#f6f6f6"></div>
<div class="m" style="left:612px;top:471px;color:#111;white-space:pre">Name : r4
    Hex:0x9
    Decimal:9
    Octal:011
    Binary:1001
    Default:9</div>


<!--/REG_CONTENT-->

<!-- ========== CONSOLE ========== -->
<div class="a" style="left:157px;top:619px;width:980px;height:110px;border:1px solid #a9a9a9;background:#dedede"></div>
<!--CONSOLE_CONTENT-->
<div class="a" style="left:261px;top:651px;width:875px;height:1px;background:#a9a9a9"></div>
<div class="a" style="left:261px;top:620px;width:1px;height:32px;background:#c0c0c0"></div>
<div class="a" style="left:160px;top:672px;width:974px;height:1px;background:#c8c8c8"></div>
<div class="a" style="left:1133px;top:672px;width:1px;height:50px;background:#c8c8c8"></div>
<div class="a" style="left:160px;top:673px;width:973px;height:50px;background:#fff"></div>
<svg style="left:0;top:0" width="1134" height="714" viewBox="0 0 1134 714">
<!-- console icon -->
<rect x="164.5" y="630.5" width="12" height="9" rx="1.5" fill="#dce8f8" stroke="#2a5aa8" stroke-width="1.3"/>
<path d="M167 633.5H172M167 636H170" stroke="#2a5aa8" stroke-width="1"/>
<path d="M166 642.5H175" stroke="#2a5aa8" stroke-width="1.6"/>
<path d="M243.5 632.5L252.5 641.5M252.5 632.5L243.5 641.5" stroke="#2a2a2a" stroke-width="2.8" stroke-linecap="round"/>
<path d="M243.5 632.5L252.5 641.5M252.5 632.5L243.5 641.5" stroke="#fff" stroke-width="1.1" stroke-linecap="round"/>
<!-- problems icon -->
<rect x="265.5" y="629.5" width="10" height="14" fill="#f4f8fc" stroke="#7a8aa8"/>
<circle cx="269.5" cy="633.5" r="2.5" fill="#e02020"/><path d="M267 642L269.5 637L272 642Z" fill="#f0a020"/>
<path d="M276 631Q279 636 276 643" fill="none" stroke="#9a9a9a"/>
<!-- executables -->
<circle cx="366.5" cy="636.5" r="6.5" fill="#7aa8e0" stroke="#3a6ab0"/><path d="M364.5 633L369.5 636.5L364.5 640Z" fill="#fff"/>
<!-- debugger console -->
<rect x="471.5" y="630.5" width="11" height="9" fill="#dce8f8" stroke="#2a4a88" stroke-width="1.2"/>
<path d="M473.5 633.5H478M473.5 636H476" stroke="#2a4a88"/>
<circle cx="481" cy="640" r="3.5" fill="#3aa050"/>
<!-- memory -->
<rect x="624.5" y="629.5" width="8" height="14" rx="4" fill="#bcd4f0" stroke="#3a6ab0"/>
<!-- stop red -->
<rect x="715.5" y="631.5" width="10" height="10" rx="1" fill="#e82a36" stroke="#c81828"/><rect x="717" y="633" width="7" height="7" fill="none" stroke="#f47a80" stroke-width="0.7"/>
<path d="M742 631L753 642M753 631L742 642" stroke="#c4c4c4" stroke-width="2.6"/>
<path d="M770 630L779 639M779 630L770 639" stroke="#d4d4d4" stroke-width="2.2"/><path d="M773 634L782 643M782 634L773 643" stroke="#c4c4c4" stroke-width="2.2"/>
<rect x="794" y="624" width="1" height="25" fill="#c6c6c6"/>
<!-- clear console -->
<rect x="808.5" y="629.5" width="10" height="12" fill="#f8f8f8" stroke="#8a8a8a"/>
<path d="M810 632H816M810 634.5H816M810 637H814" stroke="#9a9a9a"/>
<path d="M816 638L822 644M822 638L816 644" stroke="#555" stroke-width="1.3"/>
<!-- scroll lock -->
<rect x="843.5" y="629.5" width="7" height="14" fill="#f4f8fc" stroke="#7a8aa8"/>
<path d="M845.5 632H848.5M845.5 635H848.5M845.5 638H848.5" stroke="#6a7aa8"/>
<rect x="835.5" y="637.5" width="7" height="6" fill="#e8c040" stroke="#a08020"/><path d="M837 637.5V635Q839 632 841 635V637.5" fill="none" stroke="#808080"/>
<!-- word wrap -->
<rect x="862.5" y="629.5" width="10" height="12" fill="#fbf4d8" stroke="#b09a5a"/>
<path d="M864 632H870M864 634.5H870M864 637H868" stroke="#c0a860"/>
<path d="M876 634V640H870M872 638L870 640L872 642" fill="none" stroke="#3a6ab0" stroke-width="1.2"/>
<!-- selected buttons -->
<rect x="884.5" y="624.5" width="23.5" height="24" rx="4" fill="#d6d6d6" stroke="#c6c6c6"/>
<rect x="911.5" y="624.5" width="23.5" height="24" rx="4" fill="#d6d6d6" stroke="#c6c6c6"/>
<rect x="893.5" y="629.5" width="10" height="8" rx="1" fill="#eef4fc" stroke="#3a6ab0"/>
<path d="M896 632.5H901M896 635H899" stroke="#3a6ab0"/>
<rect x="889.5" y="633.5" width="9" height="7" rx="1" fill="#dce8f8" stroke="#3a6ab0"/><path d="M891 643H897" stroke="#3a6ab0" stroke-width="1.4"/>
<rect x="920.5" y="629.5" width="10" height="8" rx="1" fill="#eef4fc" stroke="#3a6ab0"/>
<path d="M923 631.5L927 635.5M927 631.5L923 635.5" stroke="#e02020" stroke-width="1.2"/>
<rect x="916.5" y="633.5" width="9" height="7" rx="1" fill="#dce8f8" stroke="#3a6ab0"/><path d="M918 643H924" stroke="#3a6ab0" stroke-width="1.4"/>
<rect x="943" y="624" width="1" height="25" fill="#c6c6c6"/>
<!-- pin -->
<rect x="957.5" y="632.5" width="13" height="10" fill="#f4f8fc" stroke="#7a7060"/><rect x="958" y="633" width="12" height="2.5" fill="#5a8ad0"/>
<path d="M964 639L968 634" stroke="#404040" stroke-width="1"/><circle cx="969" cy="632" r="3" fill="#2a9a3a"/>
<!-- display console -->
<rect x="984.5" y="629.5" width="13" height="10" rx="1.5" fill="#dce8f8" stroke="#2a5aa8" stroke-width="1.3"/>
<path d="M987 633H993M987 635.5H991" stroke="#2a5aa8"/><path d="M986 642.5H996" stroke="#2a5aa8" stroke-width="1.6"/>
<path d="M1008 634L1012 638L1016 634" fill="none" stroke="#4a4a4a" stroke-width="1.2"/>
<!-- open console -->
<rect x="1028.5" y="632.5" width="13" height="11" fill="#fbf8e8" stroke="#8a7a50"/><rect x="1029" y="633" width="12" height="2.5" fill="#5a8ad0"/>
<circle cx="1041" cy="631" r="3.2" fill="#fff4c0" stroke="#d09a20"/><path d="M1041 628.5V633.5M1038.5 631H1043.5" stroke="#d09a20"/>
<path d="M1054 634L1058 638L1062 634" fill="none" stroke="#4a4a4a" stroke-width="1.2"/>
</svg>
<div class="t" style="left:182px;top:628px;color:#111">Console</div>
<div class="t" style="left:285px;top:628px;color:#3c3c3c">Problems</div>
<div class="t" style="left:379px;top:628px;color:#3c3c3c">Executables</div>
<div class="t" style="left:489px;top:628px;color:#3c3c3c;letter-spacing:-0.25px">Debugger Console</div>
<div class="t" style="left:640px;top:628px;color:#3c3c3c">Memory</div>
<div class="a" style="left:1083px;top:631px;width:10px;height:4px;border:1px solid #5a5a5a;background:#fff"></div>
<div class="a" style="left:1110px;top:631px;width:10px;height:10px;border:1px solid #555;background:linear-gradient(#fff 0 1px,#555 1px 2px,#fff 2px)"></div>
<div class="t" style="left:160px;top:655px;font-size:14.5px;color:#3a3a3a">TP1 Debug [STM32 Cortex-M C/C++ Application]</div>
<div class="a" style="left:158px;top:673px;width:975px;height:42px;overflow:hidden">
<div class="m" style="left:4px;top:-6px;color:#111;white-space:pre">Time elapsed during download operation: 00:00:00.306</div>
</div>

<!--/CONSOLE_CONTENT-->

<!--/PANELS-->
<!-- TOOLTIP -->
<div class="a" style="left:227px;top:90px;width:204px;height:42px;border-radius:6px;background:rgba(26,26,26,0.89)"></div>
<div class="t" style="left:240px;top:103px;color:#fff;letter-spacing:0.12px">Instruction Stepping Mode</div>

</body></html>
